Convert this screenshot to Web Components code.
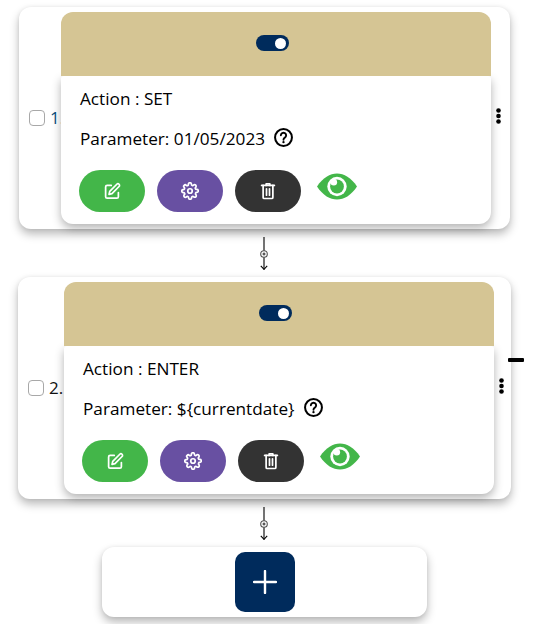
<!DOCTYPE html>
<html>
<head>
<meta charset="utf-8">
<style>
  html, body { margin: 0; background: #fff; }
  body { font-family: "Open Sans", sans-serif; color: #000; height: 624px; overflow: hidden; }
</style>
</head>
<body>
<flow-page>
  <step-card num="1." action="SET" param="01/05/2023" style="--left:19px;--width:491px;--inner-left:42px;--num:#0b4f7d;--dots-right:9px"></step-card>
  <flow-connector></flow-connector>
  <step-card num="2." action="ENTER" param="${currentdate}" dash style="--left:18px;--width:493px;--inner-left:46px;--num:#111;--dots-right:7px"></step-card>
  <flow-connector></flow-connector>
  <add-step></add-step>
</flow-page>
<script>
class FlowPage extends HTMLElement {
  connectedCallback() {
    this.attachShadow({ mode: 'open' });
    this.shadowRoot.innerHTML = `
      <style>
        :host { display: flex; flex-direction: column; padding-top: 7px; }
      </style>
      <slot></slot>
    `;
  }
}
customElements.define('flow-page', FlowPage);

class ToggleSwitch extends HTMLElement {
  connectedCallback() {
    this.attachShadow({ mode: 'open' });
    this.shadowRoot.innerHTML = `
      <style>
        :host { display: block; width: 33px; height: 16px; box-sizing: border-box; padding: 2.5px; border-radius: 8px; background: #002b5c; margin: 0 8px 2px 0; }
        i { display: block; width: 11px; height: 11px; margin-left: 17px; border-radius: 50%; background: #fff; }
      </style>
      <i></i>
    `;
  }
}
customElements.define('toggle-switch', ToggleSwitch);

class PillButton extends HTMLElement {
  connectedCallback() {
    this.attachShadow({ mode: 'open' });
    this.shadowRoot.innerHTML = `
      <style>
        :host { display: flex; align-items: center; justify-content: center; width: 66px; height: 42px; border-radius: 21px; background: var(--bg); }
        ::slotted(svg) { width: 18px; height: 18px; fill: none; stroke: #fff; stroke-width: 2.300; stroke-linecap: round; stroke-linejoin: round; }
      </style>
      <slot></slot>
    `;
  }
}
customElements.define('pill-button', PillButton);

class StepCard extends HTMLElement {
  connectedCallback() {
    const action = this.getAttribute('action');
    const param = this.getAttribute('param');
    const num = this.getAttribute('num');
    this.attachShadow({ mode: 'open' });
    this.shadowRoot.innerHTML = `
      <style>
        :host { display: block; box-sizing: border-box; position: relative; width: var(--width); height: 222px; margin-left: var(--left); border-radius: 12px; background: #fff; box-shadow: 0 5px 10px rgba(0,0,0,.28), 0 0 4px rgba(0,0,0,.06); }
        .row { display: flex; align-items: center; height: 100%; padding-left: 10px; }
        .check { flex: none; box-sizing: border-box; width: 16px; height: 16px; border: 1px solid #a8a8a8; border-radius: 4px; background: #fff; }
        .num { flex: none; width: 16px; margin-left: 5px; font-size: 17px; color: var(--num); white-space: nowrap; position: relative; top: -1px; }
        .inner { flex: none; position: absolute; left: var(--inner-left); top: 5px; width: 430px; height: 212px; display: flex; flex-direction: column; }
        .head { position: relative; z-index: 1; height: 64px; flex: none; background: #d5c594; border-radius: 12px 12px 0 0; display: flex; align-items: center; justify-content: center; }
        .body { flex: 1; box-sizing: border-box; padding: 12px 19px 0 19px; font-size: 17.2px; line-height: 22px; background: #fff; border-radius: 3px 3px 12px 12px; box-shadow: 0 4px 10px rgba(0,0,0,.3); }
        .line { display: flex; align-items: center; white-space: nowrap; }
        .line + .line { margin-top: 18px; }
        .help { width: 19px; height: 19px; margin-left: 9px; margin-top: -3px; }
        .btns { display: flex; align-items: center; gap: 12px; margin: 20px 0 0 -1px; }
        .eye { width: 40px; height: 27px; margin-left: 4px; margin-top: -9px; }
        .dots { position: absolute; right: var(--dots-right); top: 101px; width: 5px; }
        .dots svg { display: block; }
        .dash { position: absolute; left: 490px; top: 81px; width: 16px; height: 4px; border-radius: 1px; background: #000; }
      </style>
      <div class="row">
        <span class="check"></span>
        <span class="num">${num}</span>
      </div>
      <div class="inner">
        <div class="head"><toggle-switch></toggle-switch></div>
        <div class="body">
          <div class="line">Action : ${action}</div>
          <div class="line">Parameter: ${param}
            <svg class="help" viewBox="0 0 18 18" fill="none" stroke="#000" stroke-width="1.900"><circle cx="9" cy="9" r="8"/><path d="M6.500 6.900a2.500 2.500 0 1 1 3.800 2.200c-.9.500-1.300 1-1.300 2" stroke-width="1.800" stroke-linecap="round"/><circle cx="9" cy="13.400" r="1.100" fill="#000" stroke="none"/></svg>
          </div>
          <div class="btns">
            <pill-button style="--bg:#43b649"><svg viewBox="0 0 24 24"><path d="M11 4.500H5.500a2 2 0 0 0-2 2v13a2 2 0 0 0 2 2h13a2 2 0 0 0 2-2V14"/><path d="M18.400 3a2.100 2.100 0 0 1 3 3L12 15.500l-4 1 1-4z"/></svg></pill-button>
            <pill-button style="--bg:#6850a2"><svg viewBox="0 0 24 24"><circle cx="12" cy="12" r="3"/><path d="M19.400 15a1.650 1.650 0 0 0 .33 1.820l.06.06a2 2 0 1 1-2.830 2.830l-.06-.06a1.650 1.650 0 0 0-2.800 1.170V21a2 2 0 1 1-4 0v-.09A1.650 1.650 0 0 0 7.300 19.740l-.06.06a2 2 0 1 1-2.830-2.830l.06-.06a1.650 1.650 0 0 0-1.170-2.800H3a2 2 0 1 1 0-4h.09A1.650 1.650 0 0 0 4.260 7.300l-.06-.06a2 2 0 1 1 2.830-2.830l.06.06a1.650 1.650 0 0 0 2.800-1.170V3a2 2 0 1 1 4 0v.09a1.650 1.650 0 0 0 2.800 1.170l.06-.06a2 2 0 1 1 2.830 2.830l-.06.06a1.650 1.650 0 0 0 1.170 2.800H21a2 2 0 1 1 0 4h-.09A1.650 1.650 0 0 0 19.400 15z"/></svg></pill-button>
            <pill-button style="--bg:#333"><svg viewBox="0 0 24 24"><path d="M3.500 4.500h17"/><path d="M9.500 4.500V2.500h5v2"/><path d="M5.500 4.500v16a1.500 1.500 0 0 0 1.500 1.500h10a1.500 1.500 0 0 0 1.500-1.500v-16"/><path d="M10 9v8.500M14 9v8.500"/></svg></pill-button>
            <svg class="eye" viewBox="0 0 40 27"><path d="M0 13.500C6 4.500 13 .5 20 .5s14 4 20 13c-6 9-13 13-20 13S6 22.500 0 13.500z" fill="#43b649"/><circle cx="20" cy="13.500" r="9.700" fill="#fff"/><circle cx="20" cy="13.500" r="6.900" fill="#43b649"/><circle cx="16.800" cy="9.300" r="3.300" fill="#fff"/></svg>
          </div>
        </div>
      </div>
      <div class="dots"><svg width="5" height="16" viewBox="0 0 5 16" fill="#000"><circle cx="2.500" cy="2.500" r="2.300"/><circle cx="2.500" cy="8" r="2.300"/><circle cx="2.500" cy="13.500" r="2.300"/></svg></div>
      ${this.hasAttribute('dash') ? '<div class="dash"></div>' : ''}
    `;
  }
}
customElements.define('step-card', StepCard);

class FlowConnector extends HTMLElement {
  connectedCallback() {
    this.attachShadow({ mode: 'open' });
    this.shadowRoot.innerHTML = `
      <style>
        :host { display: flex; justify-content: center; height: 48px; box-sizing: border-box; padding-top: 8px; width: 528px; }
        svg { display: block; }
      </style>
      <svg width="10" height="33" viewBox="0 0 10 33" fill="none">
        <path d="M5 0v32.500" stroke="#000" stroke-width="1.100"/>
        <path d="M1.800 28.800L5 32.300l3.200-3.500" stroke="#000" stroke-width="1.100"/>
        <circle cx="5" cy="17" r="3.300" fill="#fff" stroke="#555" stroke-width="1.100"/>
        <path d="M3.500 17h3M5 15.500v3" stroke="#111" stroke-width=".9"/>
      </svg>
    `;
  }
}
customElements.define('flow-connector', FlowConnector);

class AddStep extends HTMLElement {
  connectedCallback() {
    this.attachShadow({ mode: 'open' });
    this.shadowRoot.innerHTML = `
      <style>
        :host { display: flex; justify-content: center; box-sizing: border-box; width: 325px; height: 70px; margin-left: 102px; padding-top: 5px; border-radius: 12px; background: #fff; box-shadow: 0 5px 10px rgba(0,0,0,.28), 0 0 4px rgba(0,0,0,.06); }
        .add { width: 60px; height: 60px; border-radius: 10px; background: #002b5c; display: flex; align-items: center; justify-content: center; }
      </style>
      <div class="add">
        <svg width="24" height="24" viewBox="0 0 24 24" stroke="#fff" stroke-width="2.400" stroke-linecap="round"><path d="M12 1v22M1 12h22"/></svg>
      </div>
    `;
  }
}
customElements.define('add-step', AddStep);
</script>
</body>
</html>
